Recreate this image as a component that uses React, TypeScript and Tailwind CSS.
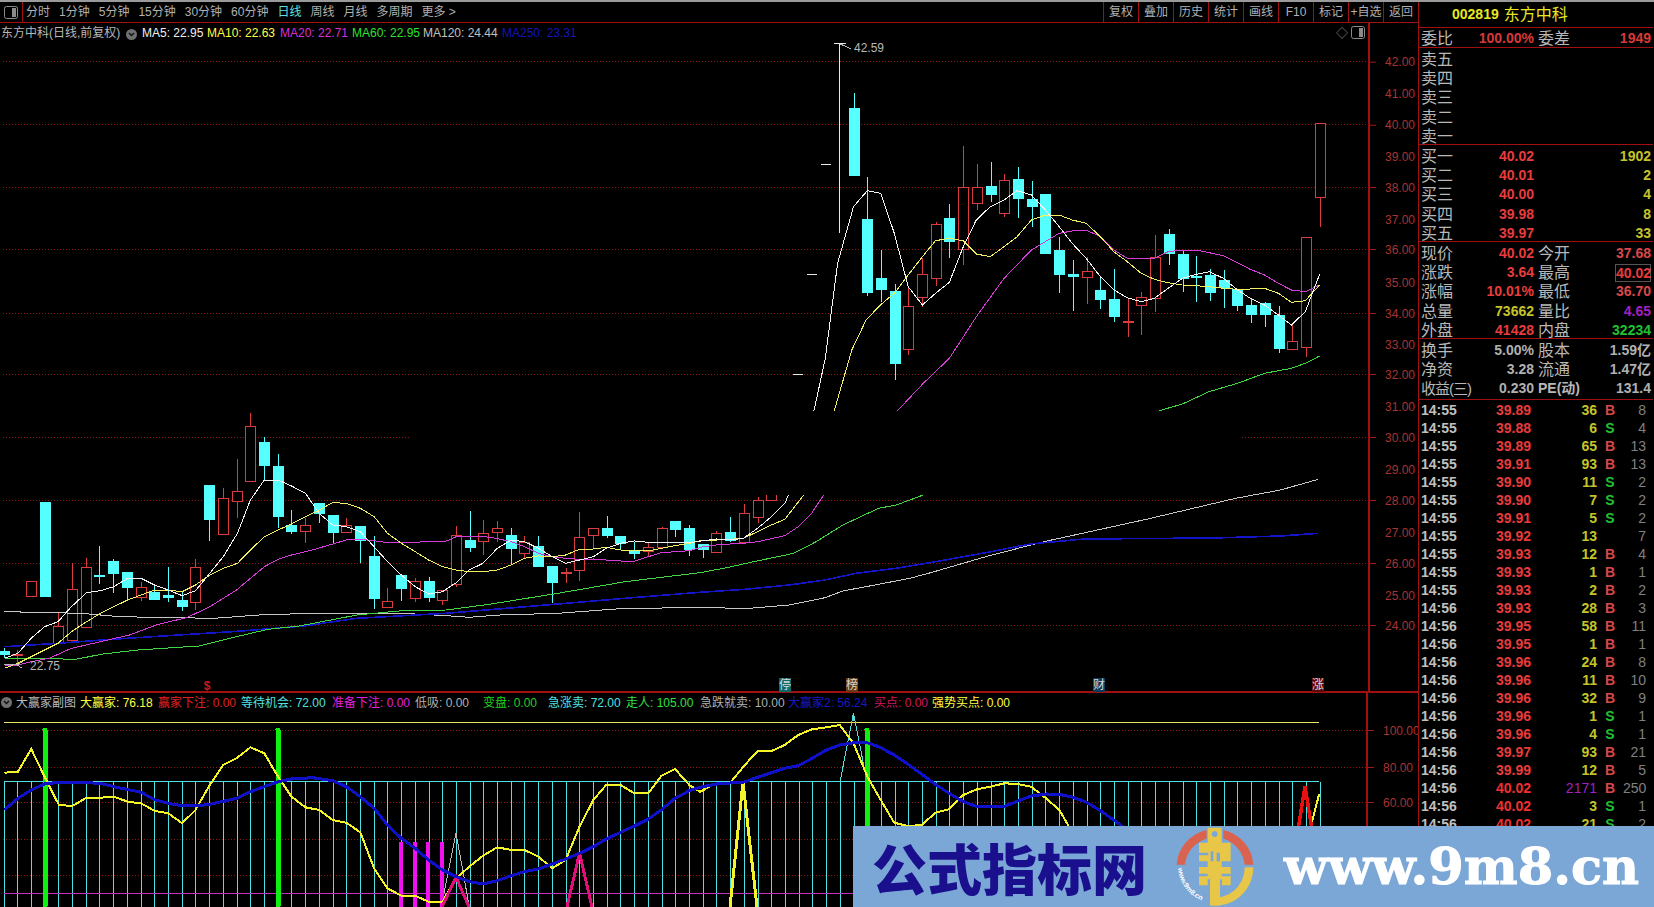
import React from 'react';

type Pt = [number, number];

// crop coordinates -> page coordinates
const z8 = (p: Pt[]): Pt[] => p.map(([x, y]) => [x / 2.24, 400 + y / 3]);
const z9 = (p: Pt[]): Pt[] => p.map(([x, y]) => [760 + x / 2.45, 30 + y / 3]);
const z10 = (p: Pt[]): Pt[] => p.map(([x, y]) => [700 + x / 2.24, 400 + y / 3]);
const z5 = (p: Pt[]): Pt[] => p.map(([x, y]) => [x / 2.24, 670 + y / 3]);
const z6 = (p: Pt[]): Pt[] => p.map(([x, y]) => [700 + x / 2.24, 670 + y / 3]);
const pts = (p: Pt[]) => p.map(([x, y]) => `${x.toFixed(1)},${y.toFixed(1)}`).join(' ');
const cx = (i: number) => Math.round(3.5 + 13.71 * i) + 0.5;

// index, body top, body bottom, wick top, wick bottom, red?
const candles: [number, number, number, number, number, boolean][] = [
  [0, 651, 655, 648, 658, false], [1, 654, 656, 650, 665, true], [2, 581, 596, 581, 596, true], [3, 502, 597, 502, 597, false],
  [4, 626, 643, 612, 643, true], [5, 589, 640, 563, 640, true], [6, 567, 627, 558, 627, true], [7, 575, 577, 546, 584, false],
  [8, 561, 574, 559, 593, false], [9, 572, 588, 572, 601, false], [10, 587, 597, 582, 601, true], [11, 592, 600, 584, 600, false],
  [12, 595, 598, 567, 602, false], [13, 600, 607, 591, 611, false], [14, 567, 602, 559, 610, true], [15, 485, 520, 485, 541, false],
  [16, 498, 534, 488, 534, true], [17, 491, 501, 459, 518, true], [18, 426, 481, 413, 481, true], [19, 442, 466, 437, 480, false],
  [20, 466, 517, 454, 528, false], [21, 525, 532, 510, 534, false], [22, 525, 531, 518, 543, true], [23, 503, 514, 503, 523, false],
  [24, 515, 533, 515, 544, false], [25, 525, 532, 518, 532, true], [26, 526, 541, 526, 563, false], [27, 556, 599, 536, 609, false],
  [28, 601, 607, 588, 607, true], [29, 575, 589, 575, 601, false], [30, 581, 598, 578, 602, true], [31, 581, 598, 577, 602, false],
  [32, 590, 600, 590, 605, true], [33, 535, 584, 526, 587, true], [34, 540, 548, 511, 552, false], [35, 533, 541, 520, 555, true],
  [36, 528, 532, 521, 542, true], [37, 535, 549, 528, 565, false], [38, 542, 553, 536, 558, true], [39, 546, 567, 536, 567, false],
  [40, 566, 583, 566, 603, false], [41, 572, 574, 568, 583, true], [42, 537, 570, 512, 581, true], [43, 528, 535, 528, 549, true],
  [44, 528, 536, 516, 538, false], [45, 536, 544, 536, 549, false], [46, 551, 554, 542, 559, false], [47, 547, 551, 542, 556, true],
  [48, 528, 547, 527, 548, true], [49, 521, 530, 521, 537, false], [50, 528, 550, 525, 556, false], [51, 544, 550, 544, 558, false],
  [52, 533, 552, 531, 552, true], [53, 532, 541, 517, 542, false], [54, 513, 542, 504, 542, true], [55, 500, 517, 497, 523, true],
  [56, 460, 500, 460, 500, true],
  [62, 108, 176, 93, 176, false], [63, 219, 293, 177, 296, false], [64, 278, 290, 250, 302, false], [65, 291, 364, 284, 380, false],
  [66, 306, 349, 287, 355, true], [67, 274, 297, 258, 307, true], [68, 224, 278, 222, 286, true], [69, 218, 242, 204, 258, false],
  [70, 187, 249, 146, 265, true], [71, 187, 203, 164, 210, true], [72, 186, 195, 162, 202, false], [73, 180, 213, 174, 217, true],
  [74, 179, 199, 167, 218, false], [75, 199, 207, 181, 227, false], [76, 194, 254, 194, 254, false], [77, 250, 275, 237, 293, false],
  [78, 274, 277, 260, 311, false], [79, 271, 277, 257, 304, true], [80, 290, 300, 277, 309, false], [81, 299, 317, 269, 322, false],
  [82, 321, 323, 298, 337, true], [83, 297, 305, 292, 335, true], [84, 257, 298, 235, 312, true], [85, 234, 254, 229, 265, false],
  [86, 254, 279, 250, 292, false], [87, 276, 277, 256, 302, false], [88, 275, 293, 269, 301, false], [89, 280, 288, 270, 308, false],
  [90, 289, 306, 289, 311, false], [91, 305, 315, 299, 323, false], [92, 303, 315, 302, 327, false], [93, 315, 349, 306, 353, false],
  [94, 341, 349, 323, 349, true], [95, 237, 347, 237, 357, true], [96, 123, 197, 123, 227, true],
];

const white = [
  ...z8([[10,775],[40,760],[70,715],[100,680],[130,665],[160,620],[194,578],[225,572],[255,560],[286,535],[316,535],[346,555],[377,570],[408,587],[438,572],[470,520],[500,470],[532,400],[561,300],[592,240],[623,240],[653,258],[684,280],[715,340],[745,375],[776,380],[807,395],[838,440],[868,485],[899,525],[930,560],[960,582],[991,575],[1022,548],[1051,510],[1082,490],[1114,445],[1145,420],[1175,425],[1206,445],[1237,470],[1267,490],[1298,480],[1329,470],[1358,445],[1390,430],[1421,423],[1452,427],[1481,428],[1512,428],[1544,428]]),
  ...z10([[7,422],[37,417],[68,420],[97,415],[129,385],[160,350],[190,310],[200,280]]),
  ...z9([[133,1138],[160,985],[190,700],[229,530],[263,482],[296,490],[329,610],[363,770],[398,825],[430,790],[464,757],[498,650],[530,570],[564,530],[598,510],[630,482],[665,495],[699,540],[733,590],[765,640],[799,685],[834,740],[867,780],[900,803],[934,815],[966,805],[1000,775],[1035,745],[1069,733],[1101,725],[1135,745],[1170,780],[1201,805],[1236,825],[1270,855],[1302,885],[1336,845],[1371,733]]),
];
const yellow = [
  ...z8([[10,805],[40,790],[70,770],[130,730],[160,695],[194,665],[225,640],[255,620],[286,600],[316,585],[346,570],[377,570],[408,575],[438,555],[470,525],[500,505],[532,490],[561,450],[592,410],[623,390],[653,372],[684,350],[715,330],[745,308],[776,310],[807,325],[838,350],[868,400],[899,430],[930,455],[960,480],[991,500],[1022,510],[1051,515],[1082,515],[1114,510],[1145,495],[1175,475],[1206,468],[1237,470],[1267,465],[1298,448],[1329,447],[1358,442],[1390,450],[1421,452],[1452,453],[1481,445],[1512,437],[1544,430]]),
  ...z10([[7,420],[37,420],[68,418],[97,415],[129,395],[160,375],[190,358],[215,315],[232,285]]),
  ...z9([[183,1138],[225,960],[260,870],[295,825],[329,790],[363,735],[398,680],[430,632],[464,625],[498,632],[530,672],[564,680],[598,650],[630,620],[665,570],[699,555],[733,555],[765,570],[799,580],[834,620],[867,665],[900,695],[934,730],[966,748],[1000,758],[1035,765],[1069,767],[1101,770],[1135,775],[1170,778],[1201,777],[1236,775],[1270,790],[1302,817],[1336,812],[1371,765]]),
];
const purple = [
  ...z8([[10,795],[40,795],[70,785],[110,775],[160,745],[225,725],[290,705],[350,675],[420,652],[470,620],[530,570],[561,535],[592,500],[623,478],[653,465],[700,450],[745,432],[776,420],[807,418],[838,422],[868,428],[899,428],[960,425],[1000,423],[1022,410],[1060,408],[1100,412],[1145,425],[1175,440],[1206,460],[1237,470],[1267,475],[1298,478],[1329,477],[1358,480],[1390,483],[1421,484],[1452,470],[1481,458],[1512,455],[1544,452]]),
  ...z10([[7,440],[37,435],[68,432],[97,430],[129,425],[190,407],[220,380],[250,340],[277,285]]),
  ...z9([[340,1138],[400,1060],[464,985],[530,860],[598,745],[665,660],[733,610],[765,603],[799,600],[834,620],[867,660],[900,685],[966,685],[1000,665],[1035,660],[1069,660],[1135,677],[1201,718],[1236,735],[1270,760],[1302,780],[1336,785],[1371,765]]),
];
const green = [
  ...z8([[10,775],[70,775],[170,778],[230,762],[310,750],[420,740],[445,738],[520,713],[600,688],[670,678],[800,645],[900,632],[1000,630],[1100,612],[1250,580],[1400,545],[1568,518]]),
  ...z10([[60,503],[120,485],[210,460],[260,425],[320,375],[400,325],[440,315],[500,285]]),
  ...z9([[990,1138],[1035,1122],[1100,1085],[1170,1060],[1236,1030],[1302,1015],[1336,1000],[1371,978]]),
];
const gray = [
  ...z8([[10,635],[80,637],[180,640],[270,650],[390,653],[480,655],[580,645],[700,640],[900,640],[1000,647],[1050,652],[1120,645],[1250,640],[1400,625],[1568,623]]),
  ...z10([[110,625],[200,615],[280,593],[320,573],[400,553],[470,535],[520,517],[640,470],[770,425],[1000,358],[1200,295],[1300,270],[1385,238]]),
];
const navy = [
  ...z8([[10,740],[130,730],[250,718],[400,705],[520,695],[680,678],[800,655],[1000,640],[1250,612],[1400,595],[1568,577]]),
  ...z10([[100,568],[200,555],[280,540],[350,520],[440,505],[520,487],[640,458],[740,432],[860,417],[1150,414],[1300,408],[1385,400]]),
];

const subYellow = [
  ...z5([[10,308],[40,305],[70,237],[100,320],[132,405],[162,408],[194,383],[225,383],[255,380],[286,395],[316,400],[347,423],[377,430],[408,460],[438,420],[470,345],[500,285],[530,265],[561,232],[592,250],[623,320],[653,380],[684,412],[715,420],[745,450],[776,458],[807,487],[838,595],[868,655],[899,677],[930,677],[960,695],[991,695],[1022,625],[1051,590],[1082,557],[1114,532],[1145,540],[1175,540],[1206,560],[1237,595],[1267,570],[1298,470],[1329,390],[1358,345],[1390,345],[1421,370],[1452,370],[1481,318],[1512,297],[1544,345],[1568,365]]),
  ...z6([[37,340],[68,338],[97,290],[129,243],[160,243],[190,225],[220,195],[251,178],[283,172],[313,165],[344,220],[375,320],[405,390],[435,458],[465,468],[497,465],[527,428],[558,418],[590,375],[620,358],[650,350],[682,340],[712,342],[742,350],[775,385],[805,420],[835,490],[870,560],[1300,600],[1358,520],[1387,372]]),
];
const subBlue = [
  ...z5([[10,420],[40,385],[70,360],[100,342],[130,337],[190,338],[225,340],[255,350],[316,367],[347,390],[377,400],[408,407],[438,408],[470,403],[530,385],[561,365],[592,350],[623,335],[653,327],[700,323],[745,332],[776,350],[807,380],[838,415],[868,465],[899,505],[930,535],[960,570],[991,600],[1022,620],[1051,635],[1082,642],[1114,632],[1145,617],[1175,605],[1206,597],[1237,582],[1267,567],[1298,550],[1329,530],[1358,507],[1390,487],[1421,468],[1452,447],[1481,420],[1512,385],[1544,362],[1568,352]]),
  ...z6([[37,342],[68,339],[97,337],[129,322],[190,295],[220,287],[251,265],[283,240],[313,225],[344,218],[375,218],[405,233],[435,255],[465,282],[497,313],[527,343],[558,370],[590,395],[620,410],[650,411],[682,409],[712,393],[742,378],[775,372],[805,373],[835,382],[866,397],[897,422],[927,450],[947,470],[1000,520]]),
];

const priceTicks: [string, number][] = [
  ['42.00', 61.7], ['41.00', 93], ['40.00', 124.7], ['39.00', 156.7], ['38.00', 187], ['37.00', 219], ['36.00', 249], ['35.00', 282],
  ['34.00', 313], ['33.00', 344], ['32.00', 374], ['31.00', 406], ['30.00', 437], ['29.00', 469], ['28.00', 500], ['27.00', 532],
  ['26.00', 563], ['25.00', 595], ['24.00', 625],
];
const gridY = [61.5, 124.5, 187.5, 249.5, 313.5, 374.5, 437.5, 500.5, 563.5, 625.5];

const tabs = ['分时', '1分钟', '5分钟', '15分钟', '30分钟', '60分钟', '日线', '周线', '月线', '多周期', '更多 >'];
const tools = ['复权', '叠加', '历史', '统计', '画线', 'F10', '标记', '+自选', '返回'];

const subLegend = [
  { t: '大赢家: 76.18', c: 'w-[78px] text-[#ffff40]' },
  { t: '赢家下注: 0.00', c: 'w-[83px] text-[#e02020]' },
  { t: '等待机会: 72.00', c: 'w-[91px] text-[#50e0e0]' },
  { t: '准备下注: 0.00', c: 'w-[83px] text-[#e020e0]' },
  { t: '低吸: 0.00', c: 'w-[68px] text-[#b0b0b0]' },
  { t: '变盘: 0.00', c: 'w-[65px] text-[#20d020]' },
  { t: '急涨卖: 72.00', c: 'w-[78px] text-[#50e0e0]' },
  { t: '走人: 105.00', c: 'w-[74px] text-[#30e040]' },
  { t: '急跌就卖: 10.00', c: 'w-[88px] text-[#b0b0b0]' },
  { t: '大赢家2: 56.24', c: 'w-[86px] text-[#1818c0]' },
  { t: '买点: 0.00', c: 'w-[58px] text-[#d01860]' },
  { t: '强势买点: 0.00', c: 'w-[100px] text-[#ffff40]' },
];

const red = 'text-[#e83c3c]';
const yel = 'text-[#c4c42a]';
const lt = 'text-[#b8b8b8]';

const quotes: [string, string, string, string, string, string][] = [
  ['现价', '40.02', red, '今开', '37.68', 'text-[#d84848]'],
  ['涨跌', '3.64', red, '最高', '40.02', red],
  ['涨幅', '10.01%', red, '最低', '36.70', 'text-[#d84848]'],
  ['总量', '73662', yel, '量比', '4.65', 'text-[#a020c0]'],
  ['外盘', '41428', red, '内盘', '32234', 'text-[#20c030]'],
];
const fundamentals: [string, string, string, string][] = [
  ['换手', '5.00%', '股本', '1.59亿'],
  ['净资', '3.28', '流通', '1.47亿'],
  ['收益(三)', '0.230', 'PE(动)', '131.4'],
];
const trades: [string, string, string, string, string][] = [
  ['14:55', '39.89', '36', 'B', '8'], ['14:55', '39.88', '6', 'S', '4'], ['14:55', '39.89', '65', 'B', '13'], ['14:55', '39.91', '93', 'B', '13'],
  ['14:55', '39.90', '11', 'S', '2'], ['14:55', '39.90', '7', 'S', '2'], ['14:55', '39.91', '5', 'S', '2'], ['14:55', '39.92', '13', '', '7'],
  ['14:55', '39.93', '12', 'B', '4'], ['14:55', '39.93', '1', 'B', '1'], ['14:55', '39.93', '2', 'B', '2'], ['14:56', '39.93', '28', 'B', '3'],
  ['14:56', '39.95', '58', 'B', '11'], ['14:56', '39.95', '1', 'B', '1'], ['14:56', '39.96', '24', 'B', '8'], ['14:56', '39.96', '11', 'B', '10'],
  ['14:56', '39.96', '32', 'B', '9'], ['14:56', '39.96', '1', 'S', '1'], ['14:56', '39.96', '4', 'S', '1'], ['14:56', '39.97', '93', 'B', '21'],
  ['14:56', '39.99', '12', 'B', '5'], ['14:56', '40.02', '2171', 'B', '250'], ['14:56', '40.02', '3', 'S', '1'], ['14:56', '40.02', '21', 'S', '2'],
];

const Chevron = () => (
  <span className="inline-flex h-[11px] w-[11px] items-center justify-center rounded-full bg-[#707070]">
    <svg width="7" height="5" viewBox="0 0 7 5"><path d="M1 1l2.5 2.5L6 1" fill="none" stroke="#111" strokeWidth="1.4" /></svg>
  </span>
);

const PanelIcon = () => (
  <svg width="14" height="13" viewBox="0 0 14 13"><rect x="0.5" y="0.5" width="13" height="12" rx="2" fill="none" stroke="#8a8a8a" /><rect x="8" y="2" width="4" height="9" fill="#8a8a8a" /></svg>
);

const MainChart = () => (
  <svg width="1368" height="649" viewBox="0 42 1368 649" shapeRendering="crispEdges" className="block overflow-visible">
    {gridY.map(y => <line key={y} x1="3" x2="1368" y1={y} y2={y} stroke="#8a1818" strokeDasharray="1 2" />)}
    {candles.map(([i, t, b, wt, wb, up]) => {
      const x = cx(i);
      const col = up ? '#d83c3c' : '#55ffff';
      const doji = b - t <= 2;
      return (
        <g key={i}>
          <line x1={x} x2={x} y1={wt} y2={wb} stroke={col} />
          {up && !doji
            ? <rect x={x - 5} y={t + 0.5} width="10" height={b - t} fill="#000" stroke={col} />
            : <rect x={x - 5.5} y={t} width="11" height={Math.max(b - t, 2)} fill={col} />}
        </g>
      );
    })}
    {/* one-price limit-up days */}
    <line x1="839.5" x2="839.5" y1="43" y2="233" stroke="#e8e8e8" />
    <line x1="834" x2="846" y1="43.5" y2="43.5" stroke="#e8e8e8" />
    <line x1="821" x2="831" y1="164.5" y2="164.5" stroke="#e8e8e8" />
    <line x1="807" x2="817" y1="274.5" y2="274.5" stroke="#e8e8e8" />
    <line x1="793" x2="803" y1="374.5" y2="374.5" stroke="#e8e8e8" />
    <polyline points={pts(gray)} fill="none" stroke="#c8c8c8" />
    <polyline points={pts(navy)} fill="none" stroke="#1414c8" strokeWidth="1.6" />
    <polyline points={pts(green)} fill="none" stroke="#40d840" />
    <polyline points={pts(purple)} fill="none" stroke="#d83cd8" />
    <polyline points={pts(yellow)} fill="none" stroke="#f0f060" />
    <polyline points={pts(white)} fill="none" stroke="#f4f4f4" />
    {/* the capture blanks this band out */}
    <rect x="410" y="411" width="832" height="84" fill="#000" />
    <path d="M840 44l5 2 6 3" fill="none" stroke="#b8b8b8" />
    <text x="854" y="52" fontSize="12" fill="#b8b8b8">42.59</text>
    <path d="M4 664l13 1M17 665l5-3M17 665l5 3" fill="none" stroke="#b8b8b8" />
    <text x="30" y="670" fontSize="12" fill="#b8b8b8">22.75</text>
    <text x="207" y="690" fontSize="12" fontWeight="700" textAnchor="middle" fill="#d01818">$</text>
    {[
      { x: 785, t: '停', b: '#0e6a6a' }, { x: 852, t: '榜', b: '#6a3a10' },
      { x: 1099, t: '财', b: '#0c3a5a' }, { x: 1318, t: '涨', b: '#600808' },
    ].map(m => (
      <g key={m.t}>
        <rect x={m.x - 6} y="678" width="12" height="14" fill={m.b} />
        <text x={m.x} y="689" fontSize="12" textAnchor="middle" fill="#d8d8d8">{m.t}</text>
      </g>
    ))}
  </svg>
);

const SubChart = () => (
  <svg width="1368" height="195" viewBox="0 712 1368 195" shapeRendering="crispEdges" className="block">
    {[730.5, 767.5, 802.5, 839.5, 875.5].map(y => <line key={y} x1="3" x2="1368" y1={y} y2={y} stroke="#8a1818" strokeDasharray="1 2" />)}
    <line x1="4" x2="1319" y1="722.5" y2="722.5" stroke="#e8e860" strokeWidth="1.4" />
    <line x1="4" x2="1319" y1="781.5" y2="781.5" stroke="#50e0e0" />
    {Array.from({ length: 97 }, (_, i) => <line key={i} x1={cx(i)} x2={cx(i)} y1="782" y2="907" stroke="#50e0e0" />)}
    <line x1="4" x2="1319" y1="893.5" y2="893.5" stroke="#c030c0" strokeWidth="1.2" />
    <path d="M840 782L853.5 713 867 782" fill="none" stroke="#50e0e0" />
    <rect x="852" y="716" width="3" height="5" fill="#50e0e0" />
    <path d="M444 893L456 833 469 905" fill="none" stroke="#b8b8b8" />
    <path d="M731 893L743 782" fill="none" stroke="#30d040" />
    {[401, 415, 428, 442].map(x => <rect key={x} x={x - 2} y="842" width="4" height="65" fill="#f010f0" />)}
    {[45, 278, 867].map(x => <rect key={x} x={x - 2.5} y="728" width="5" height="179" rx="1.5" fill="#10f010" />)}
    <polyline points={pts(subYellow)} fill="none" stroke="#f4f428" strokeWidth="2" />
    <path d="M730 907L743 782 757 907" fill="none" stroke="#f4f428" strokeWidth="3" />
    <path d="M442 907L456 877 469 907M567 907L579.5 853 592 907" fill="none" stroke="#e0107a" strokeWidth="3" />
    <path d="M1298 830L1305 786 1312 830" fill="none" stroke="#e81010" strokeWidth="3.5" />
    <polyline points={pts(subBlue)} fill="none" stroke="#1010c8" strokeWidth="3" />
  </svg>
);

const AxisLabels = ({ ticks, h, top }: { ticks: [string, number, boolean][]; h: number; top: number }) => (
  <svg width="50" height={h} viewBox={`1369 ${top} 50 ${h}`} className="block">
    {ticks.map(([t, y, mark]) => (
      <g key={t}>
        {mark && <line x1="1369" x2="1375" y1={y + 0.5} y2={y + 0.5} stroke="#a01818" />}
        <text x="1384" y={y + 4.5} fontSize="12" fill="#a83434">{t}</text>
      </g>
    ))}
  </svg>
);

const Logo = () => (
  <svg width="90" height="85" viewBox="0 0 270 255" className="self-end">
    <path d="M20 128A115 115 0 0 1 110 24L110 50A90 90 0 0 0 45 128Z" fill="#d9634e" />
    <path d="M160 24A115 115 0 0 1 250 128L224 128A90 90 0 0 0 160 50Z" fill="#d9634e" />
    <path d="M250 136A115 115 0 0 1 120 250L120 226A90 90 0 0 0 224 136Z" fill="#e8c648" />
    <path fillRule="evenodd" fill="#e8c648" d="M113 17H155V62H182V118H155V135H182V190H150V250H120V190H87V135H113V118H87V62H113ZM134 27a9 9 0 1 0 .01 0Z" />
    <path d="M87 92H115V100H87ZM122 88H130V118H122ZM140 92H150V118H140ZM87 155H113V163H87ZM155 155H182V163H155ZM113 172H120V190H113ZM150 172H156V190H150Z" fill="#7ba7d7" />
    <defs><path id="logoArc" d="M24 138A112 112 0 0 0 110 240" /></defs>
    <text fontSize="21" fontWeight="700" fill="#ffffff"><textPath href="#logoArc">www.9m8.cn</textPath></text>
  </svg>
);

const Trade = ({ r }: { r: [string, string, string, string, string] }) => (
  <div className="grid h-[18px] grid-cols-[50px_60px_66px_26px_23px] items-center pl-[2px] text-[14px] font-bold leading-[18px]">
    <span className="text-[#c0c0c0]">{r[0]}</span>
    <span className={`text-right ${r[1] === '40.02' ? 'text-[#f03030]' : red}`}>{r[1]}</span>
    <span className={`text-right ${r[2] === '2171' ? 'font-normal text-[#a020c0]' : yel}`}>{r[2]}</span>
    <span className={`text-center ${r[3] === 'S' ? 'text-[#20c030]' : 'text-[#d84848]'}`}>{r[3]}</span>
    <span className="text-right font-normal text-[#808080]">{r[4]}</span>
  </div>
);

const Level = ({ name, price, vol }: { name: string; price?: string; vol?: string }) => (
  <div className="grid h-[19.2px] grid-cols-[40px_73px_1fr] items-center pl-[2px] pr-[2px] leading-[19px]">
    <span className={`text-[16px] ${lt}`}>{name}</span>
    <span className={`text-right text-[14px] font-bold ${red}`}>{price}</span>
    <span className={`text-right text-[14px] font-bold ${yel}`}>{vol}</span>
  </div>
);

export default function App() {
  return (
    <div className="relative h-[907px] w-[1654px] overflow-hidden bg-black font-['Liberation_Sans','Noto_Sans_CJK_SC',sans-serif]">
      <div className="h-[2px] bg-[#9a9a9a]" />
      <div className="flex h-[905px]">
        <div className="w-[1419px] border-r border-[#a01010]">
          <div className="flex h-[21px] items-center border-b border-[#a01010] text-[12px] text-[#b0b0b0]">
            <div className="flex h-full w-[23px] items-center justify-center border-r border-[#a01010]"><PanelIcon /></div>
            <div className="ml-[3px] flex flex-1 items-center gap-[9px]">
              {tabs.map(t => <span key={t} className={`whitespace-nowrap ${t === '日线' ? 'text-[#60e0e0]' : ''}`}>{t}</span>)}
            </div>
            {tools.map(t => <div key={t} className="flex h-full w-[35px] items-center justify-center border-l border-[#a01010]">{t}</div>)}
          </div>

          <div className="flex h-[670px] border-b-2 border-[#a01010]">
            <div className="w-[1368px]">
              <div className="relative flex h-[19px] items-center text-[12px] whitespace-nowrap">
                <span className="w-[126px] pl-[1px] text-[#b8b8b8]">东方中科(日线,前复权)</span>
                <span className="w-[16px]"><Chevron /></span>
                <span className="w-[65px] text-[#f0f0f0]">MA5: 22.95</span>
                <span className="w-[73px] text-[#ffff40]">MA10: 22.63</span>
                <span className="w-[72px] text-[#d830d8]">MA20: 22.71</span>
                <span className="w-[71px] text-[#30e030]">MA60: 22.95</span>
                <span className="w-[79px] text-[#c0c0c0]">MA120: 24.44</span>
                <span className="text-[#1414b8]">MA250: 23.31</span>
                <span className="absolute right-[20px] top-[2px] text-[12px] text-[#808080]">◇</span>
                <span className="absolute right-[3px] top-[3px]"><PanelIcon /></span>
              </div>
              <MainChart />
            </div>
            <div className="border-l-2 border-[#a01010]">
              <AxisLabels ticks={priceTicks.map(([t, y]) => [t, y, Number(t) % 2 === 0] as [string, number, boolean])} h={668} top={23} />
            </div>
          </div>

          <div className="flex h-[214px]">
            <div className="w-[1368px] overflow-hidden">
              <div className="flex h-[19px] items-center text-[12px] whitespace-nowrap">
                <span className="flex w-[80px] items-center gap-[4px] pl-[1px] text-[#b8b8b8]"><Chevron />大赢家副图</span>
                {subLegend.map(l => <span key={l.t} className={l.c}>{l.t}</span>)}
              </div>
              <SubChart />
            </div>
            <div className="border-l-2 border-[#a01010]">
              <AxisLabels ticks={[['100.00', 730, true], ['80.00', 767, true], ['60.00', 802, true], ['40.00', 839, true], ['20.00', 875, true]]} h={214} top={693} />
            </div>
          </div>
        </div>

        <div className="w-[234px]">
          <div className="flex h-[26px] items-center border-b border-[#a01010] pl-[33px] text-[#e8e820]">
            <span className="text-[14px] font-bold">002819</span>
            <span className="ml-[5px] text-[16px]">东方中科</span>
          </div>
          <div className="grid h-[20px] grid-cols-[40px_73px_44px_1fr] items-center border-b border-[#a01010] pl-[2px] pr-[2px] pt-[1px] leading-[19px]">
            <span className={`text-[16px] ${lt}`}>委比</span>
            <span className="text-right text-[14px] font-bold text-[#d83838]">100.00%</span>
            <span className={`pl-[4px] text-[16px] ${lt}`}>委差</span>
            <span className="text-right text-[14px] font-bold text-[#d83838]">1949</span>
          </div>
          <div className="h-[97px] border-b border-[#a01010] pt-[2px]">
            {['卖五', '卖四', '卖三', '卖二', '卖一'].map(n => <Level key={n} name={n} />)}
          </div>
          <div className="h-[97px] border-b border-[#a01010] pt-[2px]">
            <Level name="买一" price="40.02" vol="1902" />
            <Level name="买二" price="40.01" vol="2" />
            <Level name="买三" price="40.00" vol="4" />
            <Level name="买四" price="39.98" vol="8" />
            <Level name="买五" price="39.97" vol="33" />
          </div>
          <div className="h-[97px] border-b border-[#a01010] pt-[2px]">
            {quotes.map(q => (
              <div key={q[0]} className="grid h-[19.2px] grid-cols-[40px_73px_44px_1fr] items-center pl-[2px] pr-[2px] leading-[19px]">
                <span className={`text-[16px] ${lt}`}>{q[0]}</span>
                <span className={`text-right text-[14px] font-bold ${q[2]}`}>{q[1]}</span>
                <span className={`pl-[4px] text-[16px] ${lt}`}>{q[3]}</span>
                <span className={`justify-self-end text-right text-[14px] font-bold ${q[5]} ${q[3] === '最高' ? 'h-[18px] w-[36px] border border-[#555] leading-[16px]' : ''}`}>{q[4]}</span>
              </div>
            ))}
          </div>
          <div className="h-[61px] border-b border-[#a01010] pt-[2px]">
            {fundamentals.map(f => (
              <div key={f[0]} className="grid h-[19.2px] grid-cols-[40px_73px_44px_1fr] items-center pl-[2px] pr-[2px] leading-[19px]">
                <span className={`whitespace-nowrap ${lt} ${f[0].length > 2 ? 'text-[15px] tracking-[-1px]' : 'text-[16px]'}`}>{f[0]}</span>
                <span className="text-right text-[14px] font-bold text-[#b0b0b0]">{f[1]}</span>
                <span className={`whitespace-nowrap pl-[4px] text-[#b8b8b8] ${f[2].length > 2 ? 'text-[14px] font-bold' : 'text-[16px]'}`}>{f[2]}</span>
                <span className="whitespace-nowrap text-right text-[14px] font-bold text-[#b0b0b0]">{f[3]}</span>
              </div>
            ))}
          </div>
          <div className="pt-[1px]">
            {trades.map((r, i) => <Trade key={i} r={r} />)}
          </div>
        </div>
      </div>

      {/* site watermark stamped over the capture */}
      <div className="absolute bottom-0 right-0 flex h-[81px] w-[801px] items-center bg-[#7ba7d7]">
        <span className="ml-[19px] w-[298px] whitespace-nowrap text-[55px] leading-[1] font-black text-[#1a0f8c] font-['Noto_Sans_CJK_SC',sans-serif]">公式指标网</span>
        <Logo />
        <span className="ml-[24px] whitespace-nowrap text-[51px] leading-[1] font-black text-white [-webkit-text-stroke:1px_white] font-['DejaVu_Serif',serif]">www.9m8.cn</span>
      </div>
    </div>
  );
}
